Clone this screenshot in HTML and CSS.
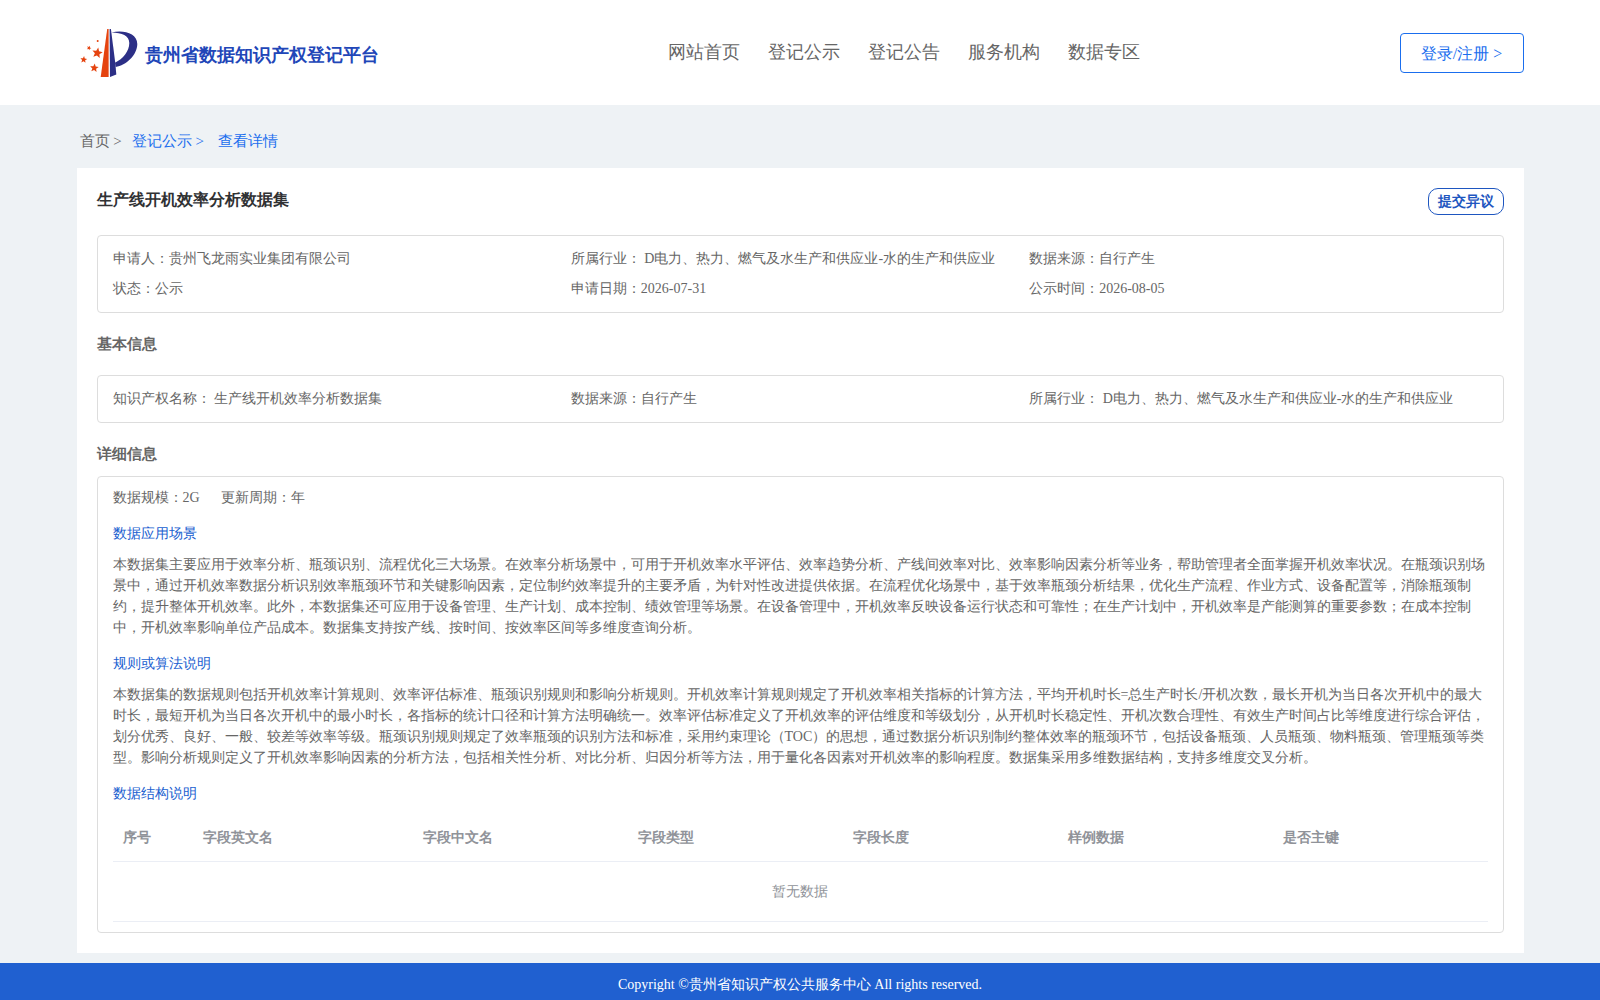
FILE: index.html
```
<!DOCTYPE html>
<html>
<head>
<meta charset="utf-8">
<title>贵州省数据知识产权登记平台</title>
<link rel="stylesheet" href="styles.css">
</head>
<body>
<header class="header">
  <div class="container header-inner">
    <a class="brand" href="#">
      <svg class="logo" viewBox="0 0 60 53" width="60" height="53" aria-hidden="true">
        <path fill="#e5430f" d="M30.200 3H31.600V51H23.700Z"/>
        <path fill="#2c2f86" d="M32.600 3H33.900L38.300 37L39.300 48.500L33 51Z"/>
        <path fill="#2c2f86" d="M34.500 6.500C46 3.500 60.300 7 60.300 18C60.300 29 49 39.500 38.700 41L38 36.700C46 33 52.300 25 52.300 17C52.300 9.500 45 6.800 34.500 6.500Z"/>
        <g fill="#e5430f">
          <path transform="translate(20.300 27) rotate(10) scale(5.500)" d="M0-1L.26-.36L.95-.31L.42.14L.59.81L0 .44L-.59.81L-.42.14L-.95-.31L-.26-.36Z"/>
          <path transform="translate(17.300 42) rotate(6) scale(4.500)" d="M0-1L.26-.36L.95-.31L.42.14L.59.81L0 .44L-.59.81L-.42.14L-.95-.31L-.26-.36Z"/>
          <path transform="translate(6.700 33.700) rotate(6) scale(3.600)" d="M0-1L.26-.36L.95-.31L.42.14L.59.81L0 .44L-.59.81L-.42.14L-.95-.31L-.26-.36Z"/>
          <path transform="translate(12 22) rotate(25) scale(2.400)" d="M0-1L.26-.36L.95-.31L.42.14L.59.81L0 .44L-.59.81L-.42.14L-.95-.31L-.26-.36Z"/>
          <circle cx="20.700" cy="15" r="1"/>
        </g>
      </svg>
      <span class="brand-name">贵州省数据知识产权登记平台</span>
    </a>
    <nav class="nav">
      <a href="#">网站首页</a>
      <a href="#">登记公示</a>
      <a href="#">登记公告</a>
      <a href="#">服务机构</a>
      <a href="#">数据专区</a>
    </nav>
    <button class="login" type="button">登录/注册 &gt;</button>
  </div>
</header>
<main class="container">
  <nav class="crumbs">
    <a class="crumb-home" href="#">首页 &gt;</a>
    <a href="#">登记公示 &gt;</a>
    <a class="crumb-current" href="#">查看详情</a>
  </nav>
  <article class="card">
    <div class="card-head">
      <h1 class="title">生产线开机效率分析数据集</h1>
      <button class="objection" type="button">提交异议</button>
    </div>
    <div class="box grid">
      <div>申请人：贵州飞龙雨实业集团有限公司</div>
      <div>所属行业： D电力、热力、燃气及水生产和供应业-水的生产和供应业</div>
      <div>数据来源：自行产生</div>
      <div>状态：公示</div>
      <div>申请日期：2026-07-31</div>
      <div>公示时间：2026-08-05</div>
    </div>
    <h2 class="section section-basic">基本信息</h2>
    <div class="box grid">
      <div>知识产权名称： 生产线开机效率分析数据集</div>
      <div>数据来源：自行产生</div>
      <div>所属行业： D电力、热力、燃气及水生产和供应业-水的生产和供应业</div>
    </div>
    <h2 class="section">详细信息</h2>
    <div class="box detail">
      <div class="meta"><span>数据规模：2G</span><span>更新周期：年</span></div>
      <h3 class="sub">数据应用场景</h3>
      <p class="text">本数据集主要应用于效率分析、瓶颈识别、流程优化三大场景。在效率分析场景中，可用于开机效率水平评估、效率趋势分析、产线间效率对比、效率影响因素分析等业务，帮助管理者全面掌握开机效率状况。在瓶颈识别场景中，通过开机效率数据分析识别效率瓶颈环节和关键影响因素，定位制约效率提升的主要矛盾，为针对性改进提供依据。在流程优化场景中，基于效率瓶颈分析结果，优化生产流程、作业方式、设备配置等，消除瓶颈制约，提升整体开机效率。此外，本数据集还可应用于设备管理、生产计划、成本控制、绩效管理等场景。在设备管理中，开机效率反映设备运行状态和可靠性；在生产计划中，开机效率是产能测算的重要参数；在成本控制中，开机效率影响单位产品成本。数据集支持按产线、按时间、按效率区间等多维度查询分析。</p>
      <h3 class="sub">规则或算法说明</h3>
      <p class="text">本数据集的数据规则包括开机效率计算规则、效率评估标准、瓶颈识别规则和影响分析规则。开机效率计算规则规定了开机效率相关指标的计算方法，平均开机时长=总生产时长/开机次数，最长开机为当日各次开机中的最大时长，最短开机为当日各次开机中的最小时长，各指标的统计口径和计算方法明确统一。效率评估标准定义了开机效率的评估维度和等级划分，从开机时长稳定性、开机次数合理性、有效生产时间占比等维度进行综合评估，划分优秀、良好、一般、较差等效率等级。瓶颈识别规则规定了效率瓶颈的识别方法和标准，采用约束理论（TOC）的思想，通过数据分析识别制约整体效率的瓶颈环节，包括设备瓶颈、人员瓶颈、物料瓶颈、管理瓶颈等类型。影响分析规则定义了开机效率影响因素的分析方法，包括相关性分析、对比分析、归因分析等方法，用于量化各因素对开机效率的影响程度。数据集采用多维数据结构，支持多维度交叉分析。</p>
      <h3 class="sub">数据结构说明</h3>
      <table class="table">
        <colgroup><col class="col-index"><col class="col-name"><col><col><col><col><col></colgroup>
        <thead>
          <tr><th>序号</th><th>字段英文名</th><th>字段中文名</th><th>字段类型</th><th>字段长度</th><th>样例数据</th><th>是否主键</th></tr>
        </thead>
        <tbody>
          <tr><td class="empty" colspan="7">暂无数据</td></tr>
        </tbody>
      </table>
    </div>
  </article>
</main>
<footer class="footer">Copyright ©贵州省知识产权公共服务中心 All rights reserved.</footer>
</body>
</html>
```
FILE: styles.css
```
* {
  box-sizing: border-box;
}

body {
  margin: 0;
  background: #eef2f5;
  color: #666;
  font-family: "Liberation Serif", serif;
  font-size: 14px;
  line-height: 21px;
}

h1, h2, h3, p {
  margin: 0;
}

a {
  color: inherit;
  text-decoration: none;
}

button {
  background: #fff;
  font-family: inherit;
  cursor: pointer;
}

.container {
  max-width: 1447px;
  margin: 0 auto;
}

.header {
  background: #fff;
}

.header-inner {
  display: flex;
  align-items: center;
  justify-content: space-between;
  height: 105px;
}

.brand {
  display: flex;
  align-items: center;
  gap: 8px;
  min-width: 332px;
}

.logo {
  overflow: visible;
}

.brand-name {
  padding-top: 4px;
  color: #2146b8;
  font-size: 18px;
  font-weight: bold;
  line-height: 24px;
}

.nav {
  display: flex;
  gap: 28px;
  padding-bottom: 2px;
  font-size: 18px;
  line-height: 24px;
}

.login {
  width: 124px;
  height: 40px;
  padding: 3px 0 0;
  border: 1px solid #1a6eee;
  border-radius: 4px;
  color: #1a6eee;
  font-size: 16px;
}

.crumbs {
  display: flex;
  gap: 10px;
  padding: 26px 3px 16px;
  color: #1a6eee;
  font-size: 15px;
}

.crumb-home {
  color: #666;
}

.crumb-current {
  padding-left: 4px;
}

.card {
  padding: 20px;
  background: #fff;
}

.card-head {
  display: flex;
  justify-content: space-between;
  margin-bottom: 20px;
}

.title {
  color: #303133;
  font-size: 16px;
  line-height: 24px;
}

.objection {
  width: 76px;
  height: 27px;
  padding: 0;
  border: 1px solid #1e56c0;
  border-radius: 10px;
  color: #1e56c0;
  font-size: 14px;
  font-weight: bold;
}

.box {
  border: 1px solid #ddd;
  border-radius: 4px;
}

.grid {
  display: grid;
  grid-template-columns: repeat(3, 1fr);
  padding: 8px 15px;
  line-height: 30px;
}

.section {
  padding: 20px 0 11px;
  font-size: 15px;
  line-height: 22px;
}

.section-basic {
  padding-bottom: 20px;
}

.detail {
  padding: 10px 15px;
}

.meta {
  display: flex;
  gap: 21px;
}

.sub {
  padding: 15px 0 10px;
  color: #2060d0;
  font-size: 14px;
  font-weight: normal;
}

.table {
  width: 100%;
  border-collapse: collapse;
  table-layout: fixed;
  color: #909399;
}

.col-index {
  width: 80px;
}

.col-name {
  width: 220px;
}

.table th,
.table td {
  padding: 13px 10px;
  border-bottom: 1px solid #ebeef5;
  text-align: left;
}

.table .empty {
  padding: 19px 10px;
  text-align: center;
}

.footer {
  margin-top: 10px;
  padding: 11px 0 5px;
  background: #2060d0;
  color: #fff;
  text-align: center;
}
```
